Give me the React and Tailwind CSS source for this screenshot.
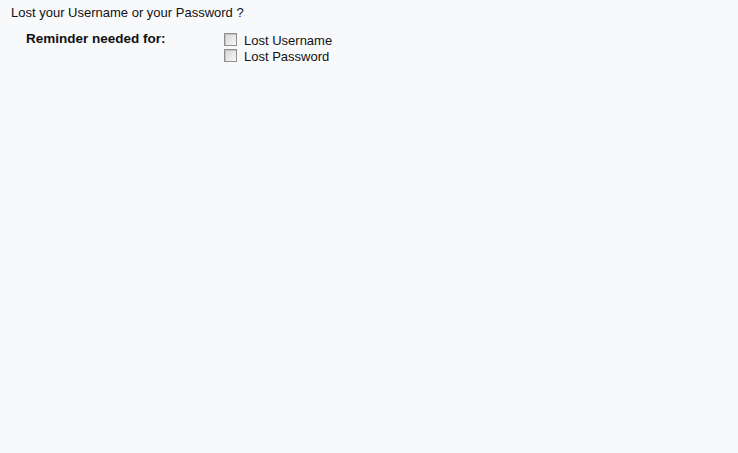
export default function App() {
  const options = ['Lost Username', 'Lost Password'];
  return (
    <div className="min-h-[453px] w-full bg-[#f8f9fb] text-[13px] leading-[16px] text-[#111] font-['Liberation_Sans',Arial,sans-serif]">
      <div className="pl-[11px] pt-[5px]">Lost your Username or your Password ?</div>
      <div className="flex pl-[26px] pt-[12px]">
        <div className="-mt-[2px] w-[198px] text-[13.5px] font-bold">Reminder needed for:</div>
        <div className="flex flex-col">
          {options.map((opt) => (
            <label key={opt} className="flex h-[16px] items-start gap-[7px]">
              <span className="block h-[13px] w-[13px] border border-[#8f8f8f] bg-gradient-to-br from-[#d6d6d6] to-[#f7f7f7] shadow-[inset_1px_1px_0_#c4c4c4]" />
              <span className="leading-[15px]">{opt}</span>
            </label>
          ))}
        </div>
      </div>
    </div>
  );
}
